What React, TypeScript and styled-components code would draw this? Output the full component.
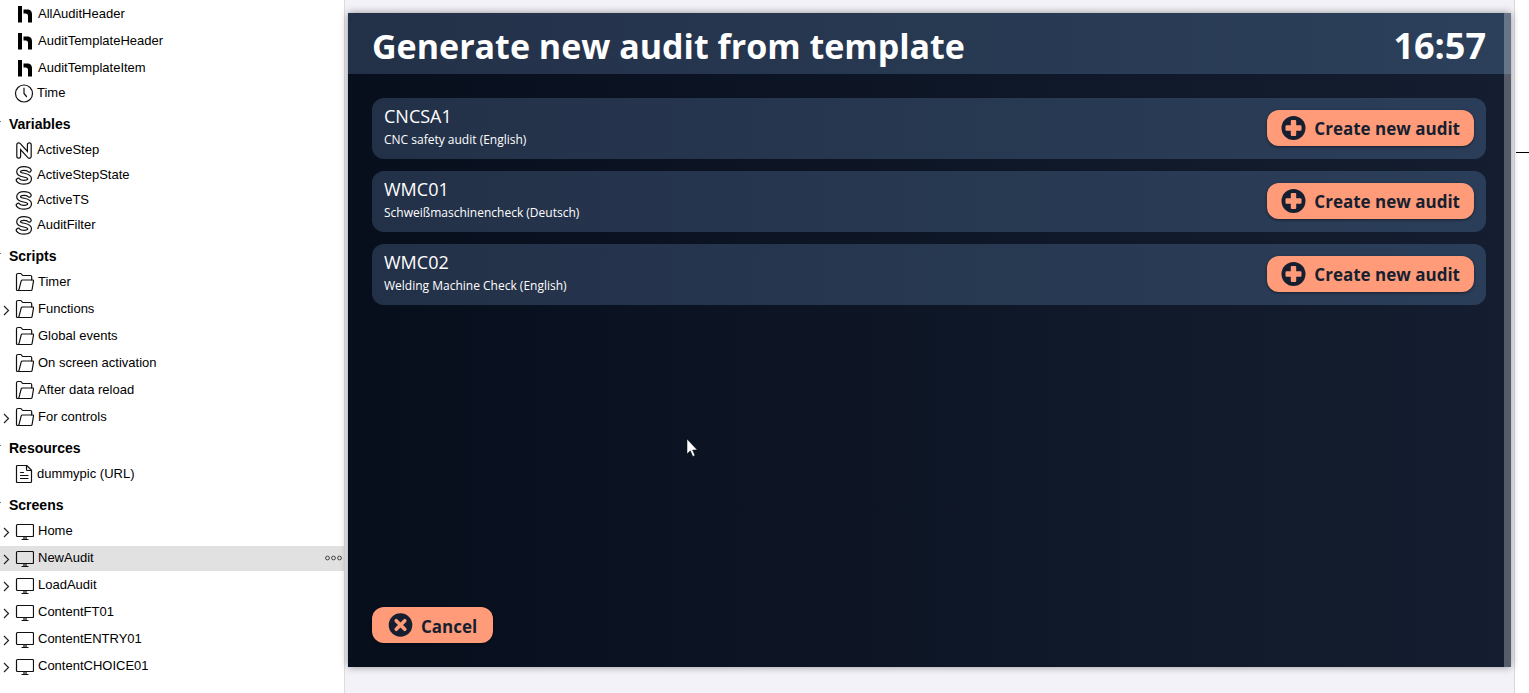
import React from "react";
import styled, { createGlobalStyle } from "styled-components";

const GlobalStyle = createGlobalStyle`
  *, *::before, *::after { box-sizing: border-box; }
  body { margin: 0; background: #fff; }
  button { font: inherit; border: 0; cursor: pointer; }
`;

const Page = styled.div`
  display: flex;
  height: 100vh;
  overflow: hidden;
`;

const Sidebar = styled.nav`
  flex: 0 0 345px;
  padding-top: 2px;
  border-right: 1px solid #dcdcdc;
  background: #fff;
  color: #000;
  font-family: "Liberation Sans", Arial, sans-serif;
  font-size: 13px;
  overflow: hidden;
`;

const SectionTitle = styled.h2`
  display: flex;
  align-items: center;
  height: 32px;
  margin: 0;
  padding: 3px 0 0;
  font-size: 14px;
  font-weight: 700;
  line-height: 16px;
`;

const CollapseMark = styled.span`
  width: 9px;
  height: 6px;
  &::before {
    content: "";
    display: block;
    width: 1px;
    height: 1px;
    background: #777;
  }
`;

const ItemList = styled.ul<{ $compact?: boolean }>`
  display: flex;
  flex-direction: column;
  gap: ${(p) => (p.$compact ? 0 : 2)}px;
  margin: 0;
  padding: 0;
  list-style: none;
`;

const Item = styled.li<{ $active?: boolean }>`
  display: flex;
  align-items: center;
  height: 25px;
  padding: 0 2px;
  background: ${(p) => (p.$active ? "#e1e1e1" : "transparent")};
  line-height: 16px;
  white-space: nowrap;
`;

const Expander = styled.button`
  display: flex;
  width: 12px;
  height: 12px;
  padding: 0;
  background: none;
`;

const IconSlot = styled.span<{ $compact?: boolean; $indent?: boolean }>`
  display: flex;
  width: ${(p) => (p.$compact ? 23 : 24)}px;
  margin-left: ${(p) => (p.$indent ? 12 : 0)}px;
  padding-bottom: 2px;
`;

const Label = styled.span`
  flex: 1;
  padding-bottom: 1px;
`;

const MoreButton = styled.button`
  display: flex;
  padding: 0 0 2px;
  background: none;
`;

const Stage = styled.main`
  flex: 1;
  display: flex;
  min-width: 0;
  padding: 13px 3px 26px;
  border-right: 1px solid #d8d8dc;
  background: #f3f2f8;
`;

const Canvas = styled.section`
  position: relative;
  flex: 1;
  display: flex;
  flex-direction: column;
  min-width: 0;
  background: linear-gradient(90deg, #070f1d, #151e30);
  box-shadow: 0 0 8px rgba(0, 0, 0, 0.4);
  color: #fff;
  font-family: "Open Sans", "Noto Sans", sans-serif;
`;

const ScrollTrack = styled.div`
  position: absolute;
  top: 0;
  right: 0;
  bottom: 0;
  width: 7px;
  background: rgba(255, 255, 255, 0.28);
`;

const TopBar = styled.header`
  display: flex;
  align-items: center;
  justify-content: space-between;
  height: 61px;
  padding: 4px 25px 0 24px;
  background: linear-gradient(90deg, #233148, #2c405b);
  font-weight: 700;
  line-height: 48px;
  white-space: nowrap;
`;

const Title = styled.h1`
  margin: 0;
  font-size: 34px;
  font-weight: 700;
`;

const Clock = styled.time`
  font-size: 36px;
`;

const Content = styled.div`
  flex: 1;
  display: flex;
  flex-direction: column;
  align-items: stretch;
  justify-content: space-between;
  padding: 24px 25px 24px 24px;
`;

const Cards = styled.div`
  display: flex;
  flex-direction: column;
  gap: 12px;
`;

const Card = styled.article`
  display: flex;
  align-items: center;
  justify-content: space-between;
  height: 61px;
  padding: 0 12px 2px;
  border-radius: 12px;
  background: linear-gradient(90deg, #233148, #2b3e59);
`;

const CardCode = styled.h3`
  margin: 0;
  font-size: 18px;
  font-weight: 400;
  line-height: 24px;
`;

const CardText = styled.p`
  margin: 0;
  font-size: 12px;
  line-height: 24px;
`;

const ActionButton = styled.button`
  display: flex;
  align-items: center;
  gap: 8px;
  height: 36px;
  padding: 0 14px;
  border-radius: 12px;
  background: #ff9b78;
  box-shadow: 0 1px 3px rgba(0, 0, 0, 0.5);
  color: #161f30;
  font-size: 17px;
  font-weight: 700;
  line-height: 24px;
  white-space: nowrap;
`;

const ButtonText = styled.span`
  padding-top: 3px;
`;

const CancelButton = styled(ActionButton)`
  align-self: flex-start;
  padding: 0 16px;
`;

const Gutter = styled.aside`
  flex: 0 0 14px;
  padding: 152px 0 0 1px;
  background: #fff;
`;

const Rule = styled.hr`
  height: 1px;
  margin: 0;
  border: 0;
  background: #000;
`;

const Pointer = styled.svg`
  position: absolute;
  left: 338px;
  top: 425px;
`;

type IconName = "header" | "clock" | "number" | "string" | "folder" | "file" | "screen";

const stroke = { fill: "none", stroke: "#111", strokeWidth: 1.2, strokeLinejoin: "round", strokeLinecap: "round" } as const;

function Outlined({ d }: { d: string }) {
  return (
    <g fill="none" strokeLinecap="round" strokeLinejoin="round">
      <path stroke="#111" strokeWidth="5" d={d} />
      <path stroke="#fff" strokeWidth="2.600" d={d} />
    </g>
  );
}

function Icon({ name }: { name: IconName }) {
  return (
    <svg width="20" height="20" viewBox="0 0 20 20" aria-hidden="true">
      {name === "header" && (
        <g fill="#000">
          <path d="M4 2h4v16.500H4z" />
          <path d="M9.500 5.500h3.500c3.500 0 5 1.800 5 5v8h-4v-6.500c0-1.600-.8-2.500-2.300-2.500H9.500z" />
        </g>
      )}
      {name === "clock" && (
        <g {...stroke}>
          <circle cx="10" cy="10.500" r="8.500" />
          <path d="M10 5v5.500l2.500 3" />
        </g>
      )}
      {name === "number" && <Outlined d="M4.700 16.300V4.700L15.300 16.300V4.700" />}
      {name === "string" && (
        <Outlined d="M15.300 5.200C14.300 3.900 12.500 3.500 9.900 3.500 6.500 3.500 4.600 4.600 4.600 6.700c0 2.200 2 2.800 5.400 3.400 3.700.7 5.600 1.500 5.600 3.700 0 2.200-2 3.400-5.600 3.400-2.800 0-4.800-.6-5.800-2" />
      )}
      {name === "folder" && (
        <g {...stroke}>
          <path d="M3.800 18.500H3.500c-.8 0-1-.5-1-1.200V3c0-.9.500-1.500 1.400-1.500h2.600c1.300 0 1.200 2 2.500 2h7.500c.8 0 1.200.5 1.200 1.200V8" />
          <path d="M3.800 18.500h13.200c.7 0 1-.3 1.100-1L19.500 9c.1-.7-.2-1-.8-1H8.400c-.7 0-1 .3-1.200.9l-2.100 8.300c-.2.8-.6 1.300-1.300 1.300z" />
        </g>
      )}
      {name === "file" && (
        <g {...stroke}>
          <path d="M3.500 1.500h9.200l4.800 4.700v11.300c0 .7-.3 1-1 1h-13c-.7 0-1-.3-1-1v-15c0-.7.3-1 1-1z" />
          <path d="M12.500 1.500v3.800c0 .8.300 1.200 1.100 1.200h3.900M6.500 8.500h3M6.500 11.500h7.500M6.500 14.500h7.500" />
        </g>
      )}
      {name === "screen" && (
        <g {...stroke}>
          <rect x="2.500" y="3.500" width="17" height="12" rx="1" />
          <path d="M10 15.500v2.500M12 15.500v2.500M8 18.500h6" />
        </g>
      )}
    </svg>
  );
}

function TreeItem({ icon, text, compact, expandable, active }: {
  icon: IconName; text: string; compact?: boolean; expandable?: boolean; active?: boolean;
}) {
  return (
    <Item $active={active}>
      {expandable && (
        <Expander aria-label={`Expand ${text}`}>
          <svg width="8" height="12" viewBox="0 0 8 12">
            <path d="M2 2 6.500 6.500 2 11" fill="none" stroke="#222" strokeWidth="1.200" />
          </svg>
        </Expander>
      )}
      <IconSlot $compact={compact} $indent={!expandable}><Icon name={icon} /></IconSlot>
      <Label>{text}</Label>
      {active && (
        <MoreButton aria-label="More options">
          <svg width="17" height="6" viewBox="0 0 17 6" fill="none" stroke="#444" strokeWidth="1">
            <circle cx="2.500" cy="3" r="1.900" />
            <circle cx="8.500" cy="3" r="1.900" />
            <circle cx="14.500" cy="3" r="1.900" />
          </svg>
        </MoreButton>
      )}
    </Item>
  );
}

function Section({ title }: { title: string }) {
  return <SectionTitle><CollapseMark />{title}</SectionTitle>;
}

function PlusIcon() {
  return (
    <svg width="25" height="24" viewBox="0 0 25 24" aria-hidden="true">
      <circle cx="12.500" cy="12" r="12" fill="#161f30" />
      <path d="M10.800 4h3.400q1 0 1 1v4.300h4.300q1 0 1 1v3.400q0 1-1 1h-4.300V19q0 1-1 1h-3.400q-1 0-1-1v-4.300H5.500q-1 0-1-1v-3.400q0-1 1-1h4.300V5q0-1 1-1z" fill="#ff9b78" />
    </svg>
  );
}

function CrossIcon() {
  return (
    <svg width="25" height="24" viewBox="0 0 25 24" aria-hidden="true">
      <circle cx="12.500" cy="12" r="11.800" fill="#161f30" />
      <path d="m8.200 7.700 8.600 8.600m0-8.600-8.600 8.600" stroke="#ff9b78" strokeWidth="3.600" strokeLinecap="round" />
    </svg>
  );
}

const scripts = [
  { text: "Timer" },
  { text: "Functions", expandable: true },
  { text: "Global events" },
  { text: "On screen activation" },
  { text: "After data reload" },
  { text: "For controls", expandable: true },
];

const screens = ["Home", "NewAudit", "LoadAudit", "ContentFT01", "ContentENTRY01", "ContentCHOICE01"];

const templates = [
  { code: "CNCSA1", text: "CNC safety audit (English)" },
  { code: "WMC01", text: "Schweißmaschinencheck (Deutsch)" },
  { code: "WMC02", text: "Welding Machine Check (English)" },
];

export default function App() {
  return (
    <Page>
      <GlobalStyle />
      <Sidebar>
        <ItemList>
          {["AllAuditHeader", "AuditTemplateHeader", "AuditTemplateItem"].map((t) => (
            <TreeItem key={t} icon="header" text={t} />
          ))}
        </ItemList>
        <ItemList $compact>
          <TreeItem icon="clock" text="Time" compact />
        </ItemList>
        <Section title="Variables" />
        <ItemList $compact>
          <TreeItem icon="number" text="ActiveStep" compact />
          <TreeItem icon="string" text="ActiveStepState" compact />
          <TreeItem icon="string" text="ActiveTS" compact />
          <TreeItem icon="string" text="AuditFilter" compact />
        </ItemList>
        <Section title="Scripts" />
        <ItemList>
          {scripts.map((s) => <TreeItem key={s.text} icon="folder" {...s} />)}
        </ItemList>
        <Section title="Resources" />
        <ItemList $compact>
          <TreeItem icon="file" text="dummypic (URL)" compact />
        </ItemList>
        <Section title="Screens" />
        <ItemList>
          {screens.map((s) => (
            <TreeItem key={s} icon="screen" text={s} expandable active={s === "NewAudit"} />
          ))}
        </ItemList>
      </Sidebar>
      <Stage>
        <Canvas>
          <TopBar>
            <Title>Generate new audit from template</Title>
            <Clock>16:57</Clock>
          </TopBar>
          <Content>
            <Cards>
              {templates.map((t) => (
                <Card key={t.code}>
                  <div>
                    <CardCode>{t.code}</CardCode>
                    <CardText>{t.text}</CardText>
                  </div>
                  <ActionButton><PlusIcon /><ButtonText>Create new audit</ButtonText></ActionButton>
                </Card>
              ))}
            </Cards>
            <CancelButton><CrossIcon /><ButtonText>Cancel</ButtonText></CancelButton>
          </Content>
          <ScrollTrack />
          <Pointer width="13" height="20" viewBox="0 0 13 20" aria-hidden="true">
            <path d="M1 1v15l3.300-3.200 2.500 5.700 2.200-1-2.400-5.500h4.700z" fill="#fff" stroke="#05080f" strokeWidth=".5" />
          </Pointer>
        </Canvas>
      </Stage>
      <Gutter><Rule /></Gutter>
    </Page>
  );
}
